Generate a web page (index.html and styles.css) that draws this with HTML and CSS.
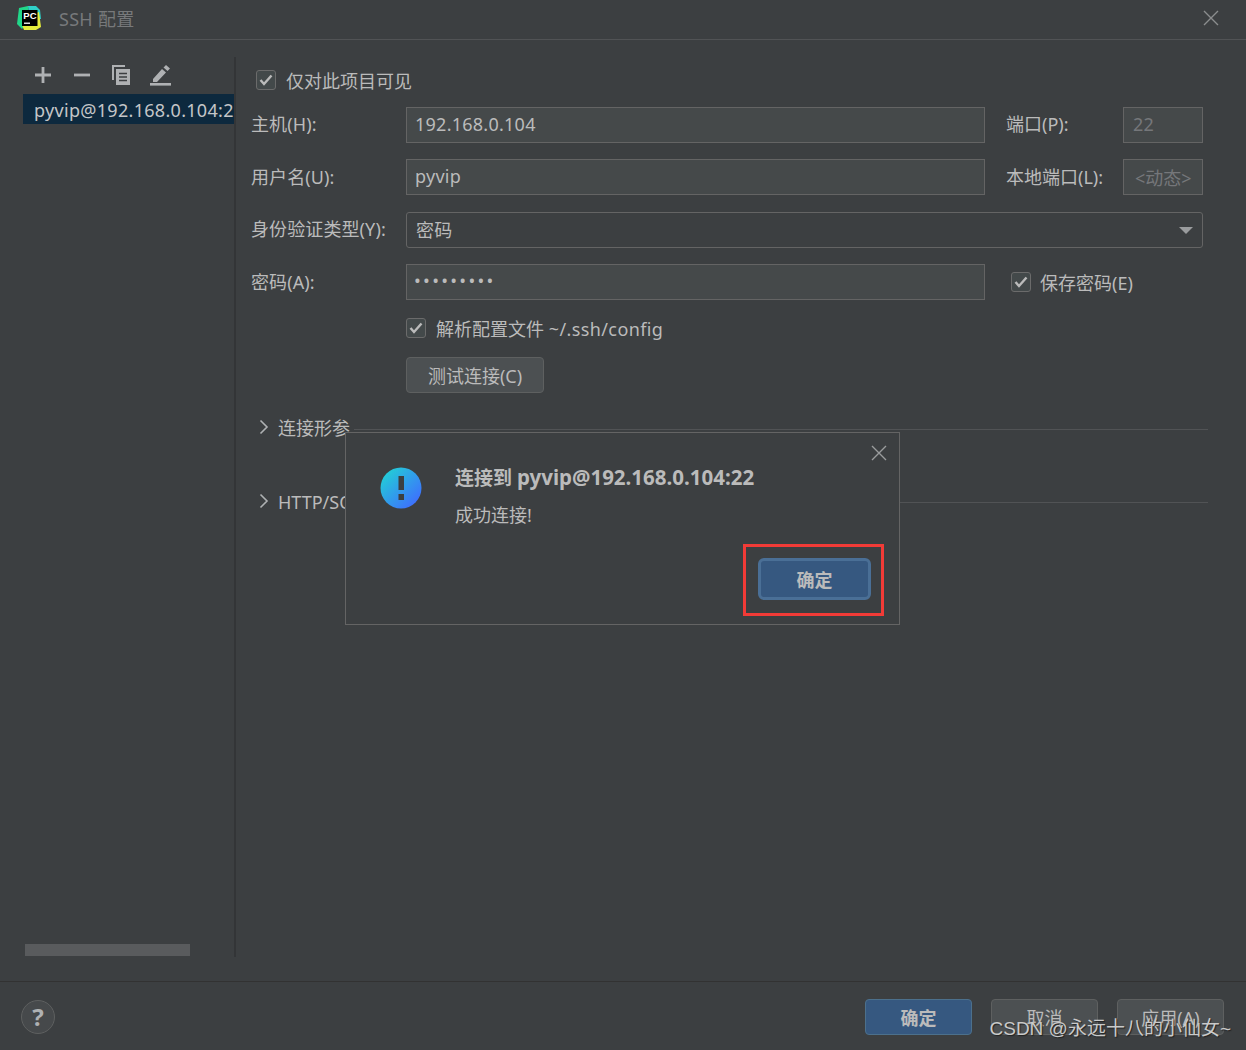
FILE: index.html
```html
<!DOCTYPE html>
<html>
<head>
    <title>SSH 配置</title>
    <link rel="stylesheet" href="styles.css">
</head>
<body>
    <div class="window">
        <div class="titlebar">
            <svg class="logo" width="26" height="26" viewBox="0 0 26 26">
                <path d="M3 3 L12 1 L14 14 L6 24 L1 19 Z" fill="#21d789"/>
                <path d="M12 1 L20 1 L24 5 L25 14 L14 14 Z" fill="#2fd0c8"/>
                <path d="M14 10 L23 7 L25 22 L20 25 L8 25 L6 20 Z" fill="#e4ec3c"/>
                <rect x="6" y="5" width="15.500" height="16" fill="#000"/>
                <text x="7.300" y="13.500" class="logo-text">PC</text>
                <rect x="8" y="17.500" width="6" height="1.500" fill="#ddd"/>
            </svg>
            <span class="title">SSH 配置</span>
            <svg class="close" width="16" height="16" viewBox="0 0 16 16">
                <path d="M1 1 L15 15 M15 1 L1 15" stroke="#8b8d8e" stroke-width="1.400" fill="none"/>
            </svg>
        </div>

        <div class="main">
            <div class="sidebar">
                <div class="toolbar">
                    <svg width="18" height="18" viewBox="0 0 18 18"><path d="M9 1 V17 M1 9 H17" stroke="#afb1b3" stroke-width="2.800"/></svg>
                    <svg width="18" height="18" viewBox="0 0 18 18"><path d="M1 9 H17" stroke="#afb1b3" stroke-width="2.800"/></svg>
                    <svg class="copy-icon" width="18" height="20" viewBox="0 0 18 20">
                        <path d="M0 0 H13 V2 H2 V15 H0 Z" fill="#afb1b3"/>
                        <path d="M4 4 H18 V20 H4 Z" fill="#afb1b3"/>
                        <path d="M7 8.500 H15 M7 12 H15 M7 15.500 H15" stroke="#3c3f41" stroke-width="1.400"/>
                    </svg>
                    <svg class="edit-icon" width="21" height="22" viewBox="0 0 21 22">
                        <path d="M3 15 L12 5 L16 8.500 L7 18 H3 Z M13.500 3.500 L16 1 L20 4.500 L17.500 7 Z" fill="#afb1b3"/>
                        <rect x="0" y="19" width="21" height="2.600" fill="#afb1b3"/>
                    </svg>
                </div>
                <div class="list-item">pyvip@192.168.0.104:22</div>
                <div class="hscroll"></div>
            </div>

            <div class="content">
                <label class="check top-check"><span class="box"><svg width="14" height="12" viewBox="0 0 14 12"><path d="M1.500 6 L5 10 L12.500 1.500" stroke="#bbb" stroke-width="2.400" fill="none"/></svg></span>仅对此项目可见</label>

                <div class="row">
                    <span class="label">主机(H):</span>
                    <div class="input grow">192.168.0.104</div>
                    <span class="side-label">端口(P):</span>
                    <div class="input small muted">22</div>
                </div>
                <div class="row">
                    <span class="label">用户名(U):</span>
                    <div class="input grow">pyvip</div>
                    <span class="side-label">本地端口(L):</span>
                    <div class="input small muted dyn">&lt;动态&gt;</div>
                </div>
                <div class="row">
                    <span class="label">身份验证类型(Y):</span>
                    <div class="select grow">密码<span class="arrow"></span></div>
                </div>
                <div class="row">
                    <span class="label">密码(A):</span>
                    <div class="input grow dots">•••••••••</div>
                    <label class="check save-check"><span class="box"><svg width="14" height="12" viewBox="0 0 14 12"><path d="M1.500 6 L5 10 L12.500 1.500" stroke="#bbb" stroke-width="2.400" fill="none"/></svg></span>保存密码(E)</label>
                </div>

                <label class="check parse-check"><span class="box"><svg width="14" height="12" viewBox="0 0 14 12"><path d="M1.500 6 L5 10 L12.500 1.500" stroke="#bbb" stroke-width="2.400" fill="none"/></svg></span><span>解析配置文件 <span class="wide">~/.ssh/config</span></span></label>
                <button class="btn test-btn">测试连接(C)</button>

                <div class="section first">
                    <svg width="10" height="16" viewBox="0 0 10 16"><path d="M1.500 1.500 L8 8 L1.500 14.500" stroke="#afb1b3" stroke-width="1.600" fill="none"/></svg>
                    <span>连接形参</span><i></i>
                </div>
                <div class="section">
                    <svg width="10" height="16" viewBox="0 0 10 16"><path d="M1.500 1.500 L8 8 L1.500 14.500" stroke="#afb1b3" stroke-width="1.600" fill="none"/></svg>
                    <span>HTTP/SOCKS 代理</span><i></i>
                </div>
            </div>
        </div>

        <div class="footer">
            <div class="help">?</div>
            <div class="footer-btns">
                <button class="btn primary">确定</button>
                <button class="btn">取消</button>
                <button class="btn">应用(A)</button>
            </div>
        </div>
    </div>

    <div class="dialog">
        <svg class="dialog-close" width="16" height="16" viewBox="0 0 16 16">
            <path d="M1 1 L15 15 M15 1 L1 15" stroke="#9a9c9d" stroke-width="1.400" fill="none"/>
        </svg>
        <svg class="dialog-icon" width="42" height="42" viewBox="0 0 42 42">
            <defs>
                <linearGradient id="infoGrad" x1="0" y1="0" x2="1" y2="1">
                    <stop offset="0.1" stop-color="#22cfd6"/>
                    <stop offset="0.9" stop-color="#3f6cff"/>
                </linearGradient>
            </defs>
            <circle cx="21" cy="21" r="20.500" fill="url(#infoGrad)"/>
            <rect x="18.500" y="9" width="5.500" height="14" fill="#3c3f41"/>
            <rect x="18.500" y="27" width="5.500" height="6" fill="#3c3f41"/>
        </svg>
        <div class="dialog-body">
            <div class="dialog-title">连接到 <span class="title-latin">pyvip@192.168.0.104:22</span></div>
            <div class="dialog-msg">成功连接!</div>
            <div class="dialog-actions">
                <div class="red-box"><button class="btn primary focused">确定</button></div>
            </div>
        </div>
    </div>

    <div class="watermark">CSDN @永远十八的小仙女~</div>
</body>
</html>
```

FILE: styles.css
```css
* {
    box-sizing: border-box;
}

html, body {
    margin: 0;
    padding: 0;
    height: 100%;
    overflow: hidden;
}

body {
    font-family: "Noto Sans", "Noto Sans CJK SC", sans-serif;
    font-size: 18px;
    color: #bbbbbb;
    background-color: #3c3f41;
}

.window {
    display: flex;
    flex-direction: column;
    height: 1050px;
}

.titlebar {
    height: 40px;
    flex: none;
    display: flex;
    align-items: center;
    padding: 0 27px 3px 16px;
    border-bottom: 1px solid #515355;
}

.logo-text {
    font-family: "Liberation Sans", sans-serif;
    font-size: 9.500px;
    font-weight: bold;
    fill: #fff;
}

.title {
    margin-left: 17px;
    color: #77797b;
    letter-spacing: 0.3px;
}

.close {
    margin-left: auto;
}

.main {
    flex: 1;
    display: flex;
    padding: 17px 0 24px;
    min-height: 0;
}

.sidebar {
    width: 236px;
    flex: none;
    display: flex;
    flex-direction: column;
    padding-left: 23px;
    padding-bottom: 1px;
    border-right: 2px solid #333537;
}

.toolbar {
    height: 36px;
    margin-bottom: 1px;
    display: flex;
    align-items: center;
    gap: 21px;
    padding: 0 0 0 11px;
}

.edit-icon {
    margin-left: -1px;
}

.list-item {
    height: 30px;
    line-height: 32px;
    background-color: #0d293e;
    padding-left: 11px;
    color: #c4c6c8;
    letter-spacing: 0.3px;
    overflow: hidden;
    white-space: nowrap;
}

.hscroll {
    margin-top: auto;
    margin-left: 2px;
    width: 165px;
    height: 12px;
    flex: none;
    background-color: #595b5d;
}

.content {
    flex: 1;
    padding: 11px 38px 0 15px;
    min-width: 0;
}

.check {
    display: flex;
    align-items: center;
    gap: 10px;
    white-space: nowrap;
}

.box {
    width: 20px;
    height: 20px;
    flex: none;
    display: flex;
    align-items: center;
    justify-content: center;
    background-color: #43494a;
    border: 1px solid #6b6b6b;
    border-radius: 3px;
}

.top-check {
    height: 24px;
    margin-left: 5px;
    margin-bottom: 14.800px;
}

.row {
    display: flex;
    align-items: center;
    height: 36px;
    margin-bottom: 16.500px;
    padding-right: 5px;
}

.label {
    width: 155px;
    flex: none;
    padding-bottom: 3px;
    letter-spacing: 0.1px;
    white-space: nowrap;
}

.grow {
    flex: 1;
    min-width: 0;
}

.input, .select {
    height: 36px;
    line-height: 32px;
    padding: 0 8px;
    background-color: #45494a;
    border: 1px solid #646464;
    letter-spacing: 0.25px;
    white-space: nowrap;
}

.select {
    position: relative;
    padding: 0 9px;
    line-height: 34px;
    background-color: #3c3f41;
    border-radius: 3px;
}

.arrow {
    position: absolute;
    right: 9px;
    top: 14px;
    width: 0;
    height: 0;
    border-left: 7px solid transparent;
    border-right: 7px solid transparent;
    border-top: 7px solid #9a9c9e;
}

.side-label {
    width: 138px;
    flex: none;
    padding-left: 21px;
    padding-bottom: 3px;
    white-space: nowrap;
}

.small {
    width: 80px;
    padding: 0 9px;
    flex: none;
}

.muted {
    color: #75777a;
}

.dyn {
    padding: 0 0 0 11px;
    line-height: 36px;
    letter-spacing: 0;
}

.dots {
    padding-left: 7px;
    line-height: 31px;
    letter-spacing: 2.300px;
}

.save-check {
    width: 218px;
    flex: none;
    gap: 9px;
    padding-left: 26px;
}

.parse-check {
    height: 24px;
    margin: -1px 0 17px 155px;
}

.wide {
    letter-spacing: 0.4px;
}

.btn {
    width: 107px;
    height: 36px;
    padding: 0;
    font-family: inherit;
    font-size: 18px;
    color: #bbbbbb;
    background-color: #4c5052;
    border: 1px solid #5e6060;
    border-radius: 4px;
}

.test-btn {
    width: 138px;
    margin-left: 155px;
    display: block;
}

.primary {
    font-weight: bold;
    background-color: #365880;
    border-color: #4c708c;
}

.section {
    display: flex;
    align-items: center;
    height: 24px;
    margin-top: 50px;
    padding-left: 8px;
}

.section.first {
    margin-top: 22px;
}

.section span {
    margin-left: 9px;
    white-space: nowrap;
}

.section i {
    flex: 1;
    height: 1px;
    margin-left: 4px;
    margin-top: 4px;
    background-color: #515355;
}

.section.first i {
    margin-top: 6px;
}

.footer {
    height: 69px;
    flex: none;
    display: flex;
    align-items: center;
    justify-content: space-between;
    padding: 2px 22px 0 21px;
    border-top: 1px solid #323232;
}

.help {
    width: 34px;
    height: 34px;
    border-radius: 50%;
    border: 1px solid #5e6060;
    background-color: #46494b;
    text-align: center;
    line-height: 31px;
    font-size: 24px;
    font-weight: bold;
    color: #afb1b3;
}

.footer-btns {
    display: flex;
    gap: 19px;
}

.dialog {
    position: absolute;
    left: 345px;
    top: 432px;
    width: 555px;
    height: 193px;
    display: flex;
    background-color: #3c3f41;
    border: 1px solid #646464;
}

.dialog-close {
    position: absolute;
    right: 12px;
    top: 12px;
}

.dialog-icon {
    margin: 34px 0 0 34px;
    flex: none;
}

.dialog-body {
    flex: 1;
    padding: 29px 15px 0 33px;
    display: flex;
    flex-direction: column;
}

.dialog-title {
    font-weight: bold;
    font-size: 19px;
    line-height: 30px;
}

.title-latin {
    font-size: 20.500px;
}

.dialog-msg {
    margin-top: 7px;
    line-height: 30px;
}

.dialog-actions {
    display: flex;
    justify-content: flex-end;
    margin-top: 14px;
}

.red-box {
    width: 141px;
    height: 72px;
    display: flex;
    align-items: center;
    justify-content: center;
    padding: 0 0 2px 2px;
    border: 3px solid #f23b37;
}

.focused {
    width: 113px;
    height: 42px;
    border: 3px solid #4a6f96;
    border-radius: 6px;
}

.watermark {
    position: absolute;
    right: 15px;
    top: 1015px;
    line-height: 28px;
    font-family: "Liberation Sans", "Noto Sans CJK SC", sans-serif;
    font-size: 19px;
    white-space: nowrap;
    color: #c9caca;
    text-shadow: 1px 1px 1px #222;
}
```
